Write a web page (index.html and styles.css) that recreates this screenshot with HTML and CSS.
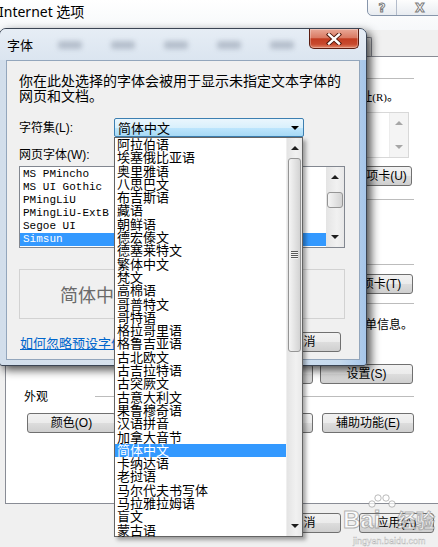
FILE: index.html
```html
<!DOCTYPE html>
<html lang="zh-CN">
<head>
    <meta charset="UTF-8">
    <meta name="viewport" content="width=device-width, initial-scale=1.0">
    <title>Internet 选项 - 字体</title>
    <link rel="stylesheet" href="styles.css">
</head>
<body>
    <!-- the Internet Options window underneath -->
    <div class="inet">
        <div class="inet-title">
            <span class="inet-name">Internet 选项</span>
            <div class="caption">
                <span class="cap-help">?</span>
                <span class="cap-close">X</span>
            </div>
        </div>

        <div class="tabs">
            <span class="tab active">常规</span>
            <span class="tab">安全</span>
            <span class="tab">隐私</span>
            <span class="tab">内容</span>
            <span class="tab">连接</span>
            <span class="tab">程序</span>
            <span class="tab">高级</span>
        </div>

        <div class="panel">
            <div class="group-head"><span>主页</span><i></i></div>
            <div class="note">若要创建多个主页选项卡，请在每行输入一个地址<small>(R)</small>。</div>
            <div class="home-box">
                <div class="home-text">http://www.baidu.com/</div>
                <div class="mini-sb"><span class="arr up off"></span><span class="arr down off"></span></div>
            </div>
            <div class="btn-row home-btns">
                <button class="btn w100">使用当前页(C)</button>
                <button class="btn w100">使用默认值(F)</button>
                <button class="btn w99">使用新选项卡(U)</button>
            </div>

            <div class="group-head startup-head"><span>启动</span><i></i></div>
            <div class="startup">
                <label><input type="radio" name="start"> 从上次会话中的选项卡开始(B)</label>
                <label><input type="radio" name="start" checked> 从主页开始(H)</label>
            </div>

            <div class="group-head"><span>选项卡</span><i></i></div>
            <div class="tab-row">
                <span>更改网页在选项卡中的显示方式。</span>
                <button class="btn w75">选项卡(T)</button>
            </div>

            <div class="group-head hist-head"><span>浏览历史记录</span><i></i></div>
            <div class="hist-note">删除临时文件、历史记录、Cookie、保存的密码和网页表单信息。</div>
            <div class="hist-check"><label><input type="checkbox"> 退出时删除浏览历史记录(W)</label></div>
            <div class="btn-row hist-btns">
                <button class="btn w93">删除(D)...</button>
                <button class="btn w93">设置(S)</button>
            </div>

            <div class="group-head look-head"><span>外观</span><i></i></div>
            <div class="look-row">
                <button class="btn w89">颜色(O)</button>
                <button class="btn w89">语言(L)</button>
                <button class="btn w90">字体(N)</button>
                <button class="btn w92">辅助功能(E)</button>
            </div>
        </div>

        <div class="inet-foot">
            <button class="btn w75">确定</button>
            <button class="btn w75">取消</button>
            <button class="btn w75 apply">应用(A)</button>
        </div>
    </div>

    <!-- the Fonts dialog on top -->
    <div class="font-dlg">
        <div class="dlg-title">
            <span class="dlg-name">字体</span>
            <span class="glass-blur"><i></i><i></i><i></i><i></i><i></i></span>
            <button class="dlg-close">
                <svg width="16" height="12" viewBox="0 0 16 12">
                    <path d="M3 1.5 L13 10.5 M13 1.5 L3 10.5" stroke="#4a1408" stroke-width="4.2" stroke-linecap="square"/>
                    <path d="M3 1.5 L13 10.5 M13 1.5 L3 10.5" stroke="#ffffff" stroke-width="2.4" stroke-linecap="square"/>
                </svg>
            </button>
        </div>

        <div class="dlg-body">
            <p class="desc">你在此处选择的字体会被用于显示未指定文本字体的网页和文档。</p>

            <div class="charset-row">
                <span class="field-label">字符集(L):</span>
                <div class="select">
                    <span>简体中文</span>
                    <span class="select-arrow"></span>

                    <div class="dropdown">
                        <ul>
                            <li>阿拉伯语</li>
                            <li>埃塞俄比亚语</li>
                            <li>奥里雅语</li>
                            <li>八思巴文</li>
                            <li>布吉斯语</li>
                            <li>藏语</li>
                            <li>朝鲜语</li>
                            <li>德宏傣文</li>
                            <li>德塞莱特文</li>
                            <li>繁体中文</li>
                            <li>梵文</li>
                            <li>高棉语</li>
                            <li>哥普特文</li>
                            <li>哥特语</li>
                            <li>格拉哥里语</li>
                            <li>格鲁吉亚语</li>
                            <li>古北欧文</li>
                            <li>古吉拉特语</li>
                            <li>古突厥文</li>
                            <li>古意大利文</li>
                            <li>果鲁穆奇语</li>
                            <li>汉语拼音</li>
                            <li>加拿大音节</li>
                            <li class="sel">简体中文</li>
                            <li>卡纳达语</li>
                            <li>老挝语</li>
                            <li>马尔代夫书写体</li>
                            <li>马拉雅拉姆语</li>
                            <li>盲文</li>
                            <li>蒙古语</li>
                        </ul>
                        <div class="dd-sb">
                            <span class="sb-btn"><span class="arr up"></span></span>
                            <span class="dd-thumb"><span class="grip"></span></span>
                            <span class="sb-track"></span>
                            <span class="sb-btn"><span class="arr down"></span></span>
                        </div>
                    </div>
                </div>
            </div>

            <div class="field-label-w">网页字体(W):</div>
            <div class="fontlist">
                <ul>
                    <li>MS PMincho</li>
                    <li>MS UI Gothic</li>
                    <li>PMingLiU</li>
                    <li>PMingLiU-ExtB</li>
                    <li>Segoe UI</li>
                    <li class="sel">Simsun</li>
                </ul>
                <div class="fl-sb">
                    <span class="sb-btn"><span class="arr up"></span></span>
                    <span class="fl-thumb"></span>
                    <span class="sb-track"></span>
                    <span class="sb-btn"><span class="arr down"></span></span>
                </div>
            </div>

            <div class="preview">简体中文</div>

            <div class="dlg-foot">
                <a href="#" class="help-link">如何忽略预设字体？</a>
                <div class="dlg-buttons">
                    <button class="btn w75">确定</button>
                    <button class="btn w75">取消</button>
                </div>
            </div>
        </div>
    </div>

    <div class="watermark">
        <svg class="paw" width="30" height="16" viewBox="0 0 30 16">
            <circle cx="5" cy="10" r="3.2"/>
            <circle cx="11" cy="4" r="3.2"/>
            <circle cx="19" cy="4" r="3.2"/>
            <circle cx="25" cy="10" r="3.2"/>
        </svg>
        <span class="wm-bai">Bai</span>
        <span class="wm-jy">经验</span>
        <span class="wm-url">jingyan.baidu.com</span>
    </div>
</body>
</html>
```

FILE: styles.css
```css
* {
    box-sizing: border-box;
}

body {
    margin: 0;
    width: 438px;
    height: 547px;
    overflow: hidden;
    position: relative;
    font-family: "Liberation Sans", "Noto Sans CJK SC", sans-serif;
    font-size: 12px;
    color: #000;
    background: #f0f0f0;
}

ul {
    margin: 0;
    padding: 0;
    list-style: none;
}

.btn {
    flex-shrink: 0;
    height: 20px;
    padding: 0;
    border: 1px solid #707070;
    border-radius: 3px;
    background: linear-gradient(#f2f2f2 0%, #ebebeb 50%, #dddddd 51%, #cfcfcf 100%);
    font-family: inherit;
    font-size: 12px;
    line-height: 18px;
    color: #000;
    white-space: nowrap;
}

.w75 { width: 75px; }
.w89 { width: 89px; }
.w90 { width: 90px; }
.w92 { width: 92px; }
.w93 { width: 93px; }
.w99 { width: 99px; }
.w100 { width: 100px; }

/* small scroll arrows */
.arr {
    width: 0;
    height: 0;
    border-left: 4px solid transparent;
    border-right: 4px solid transparent;
}

.arr.up {
    border-bottom: 4px solid #1e1e1e;
}

.arr.down {
    border-top: 4px solid #1e1e1e;
}

.arr.up.off {
    border-bottom-color: #a6a6a6;
}

.arr.down.off {
    border-top-color: #a6a6a6;
}

.sb-btn {
    display: flex;
    align-items: center;
    justify-content: center;
    height: 20px;
    flex-shrink: 0;
}

.sb-track {
    flex: 1;
}

/* ---------- Internet Options window ---------- */

.inet {
    width: 438px;
    height: 547px;
}

.inet-title {
    display: flex;
    align-items: flex-start;
    height: 30px;
    background: linear-gradient(#ffffff, #f6f8fa);
}

.inet-name {
    margin: 4px 0 0 -1px;
    font-family: "Noto Sans", "Noto Sans CJK SC", sans-serif;
    font-size: 14px;
    line-height: 16px;
}

.caption {
    display: flex;
    flex-shrink: 0;
    height: 17px;
    margin: -1px -12px 0 auto;
    border: 1px solid #8796ab;
    border-radius: 0 0 5px 5px;
    background: linear-gradient(#fdfdfd, #e8ecf1);
}

.caption span {
    display: flex;
    align-items: center;
    justify-content: center;
    font-family: "DejaVu Sans", sans-serif;
    font-size: 12px;
    font-weight: bold;
    color: #fff;
    -webkit-text-stroke: 1px #7c7c7c;
}

.cap-help {
    width: 29px;
    border-right: 1px solid #b3bccb;
}

.cap-close {
    width: 52px;
    padding-right: 6px;
}

.tabs {
    display: flex;
    align-items: flex-end;
    height: 26px;
    padding-left: 7px;
}

.tab {
    width: 53px;
    height: 19px;
    margin-right: -1px;
    border: 1px solid #898c95;
    border-bottom: none;
    border-radius: 2px 2px 0 0;
    background: linear-gradient(#f3f3f3, #dedede);
    text-align: center;
    line-height: 17px;
}

.tab.active {
    height: 21px;
    background: #fff;
}

.panel {
    width: 440px;
    height: 448px;
    margin-left: 5px;
    padding: 14px 0 0 18px;
    border: 1px solid #898c95;
    background: #fff;
}

.panel > div {
    width: 390px;
}

.group-head {
    display: flex;
    align-items: center;
    height: 14px;
}

.group-head span {
    width: 71px;
    line-height: 14px;
    padding-top: 2px;
}

.group-head i {
    flex: 1;
    height: 1px;
    background: #bcbcbc;
}

.note {
    margin-top: 5px;
    padding-right: 15px;
    line-height: 14px;
    text-align: right;
    white-space: nowrap;
}

.note small {
    font-family: "Liberation Serif", serif;
    font-size: 11px;
}

.home-box {
    display: flex;
    height: 46px;
    margin: 8px 0 0 38px;
    border: 1px solid #d8d8d8;
    width: 347px !important;
}

.home-text {
    flex: 1;
    padding: 2px 3px;
}

.mini-sb {
    display: flex;
    flex-direction: column;
    align-items: center;
    justify-content: space-between;
    width: 19px;
    padding: 8px 0 8px;
    border-left: 1px solid #ececec;
    background: #f4f4f4;
}

.btn-row {
    display: flex;
    justify-content: flex-end;
    gap: 7px;
}

.home-btns {
    margin-top: 8px;
    padding-right: 2px;
}

.startup-head {
    margin-top: 6px;
}

.startup {
    display: flex;
    flex-direction: column;
    gap: 4px;
    height: 51px;
    padding: 7px 0 0 6px;
}

.startup label,
.hist-check label {
    display: flex;
    align-items: center;
    gap: 2px;
    height: 16px;
}

.startup input,
.hist-check input {
    margin: 0;
    width: 13px;
    height: 13px;
}

.tab-row {
    display: flex;
    align-items: center;
    justify-content: space-between;
    margin-top: 3px;
    padding-right: 1px;
}

.hist-head {
    margin-top: 2px;
}

.hist-note {
    margin-top: 8px;
    padding-right: 1px;
    line-height: 14px;
    text-align: right;
    white-space: nowrap;
}

.hist-check {
    height: 14px;
    margin-top: 7px;
    padding-left: 6px;
}

.hist-btns {
    margin-top: 11px;
    padding-right: 1px;
}

.look-head {
    margin-top: 5px;
}

.look-row {
    display: flex;
    gap: 9px;
    margin-top: 10px;
    padding-left: 3px;
}

.inet-foot {
    display: flex;
    gap: 6px;
    padding: 9px 0 0 185px;
}

.inet-foot .apply {
    margin-left: 12px;
}

/* ---------- Fonts dialog ---------- */

.font-dlg {
    position: absolute;
    left: -1px;
    top: 28px;
    z-index: 2;
    display: flex;
    flex-direction: column;
    width: 368px;
    height: 338px;
    padding: 0 6px 5px 6px;
    border: 1px solid #3b4554;
    border-radius: 7px 7px 3px 3px;
    background: linear-gradient(to right, #d2deeb 0%, #dbe5f0 55%, #c6daee 93%, #a6c6ea 100%);
    box-shadow: 4px 4px 10px rgba(0, 0, 0, 0.7);
}

.dlg-title {
    position: relative;
    display: flex;
    align-items: center;
    height: 31px;
    margin: 0 -6px;
    padding-left: 7px;
    border-radius: 6px 6px 0 0;
    background: linear-gradient(#e6edf5, #dbe5f0);
}

.dlg-name {
    font-family: "Noto Sans CJK SC", sans-serif;
    font-size: 13px;
    line-height: 16px;
}

.glass-blur {
    display: flex;
    gap: 29px;
    margin-left: 25px;
}

.glass-blur i {
    width: 24px;
    height: 8px;
    border-radius: 3px;
    background: rgba(70, 82, 104, 0.28);
    filter: blur(2.5px);
}

.dlg-close {
    position: absolute;
    top: 0;
    right: 7px;
    display: flex;
    align-items: center;
    justify-content: center;
    width: 50px;
    height: 20px;
    padding: 0;
    border: 1px solid #5a1c10;
    border-top: none;
    border-radius: 0 0 5px 5px;
    background: linear-gradient(#e9a998 0%, #da7b64 45%, #c23c21 52%, #c84a2e 80%, #e1886a 100%);
    box-shadow: inset 0 0 0 1px rgba(255, 255, 255, 0.3);
}

.dlg-body {
    flex: 1;
    padding: 12px 13px 0 12px;
    border: 1px solid #93a6bc;
    background: #f0f0f0;
}

.desc {
    margin: 0;
    font-family: "Noto Sans CJK SC", sans-serif;
    font-size: 14px;
    line-height: 15px;
}

.charset-row {
    display: flex;
    align-items: center;
    height: 19px;
    margin-top: 15px;
}

.field-label {
    width: 95px;
    line-height: 14px;
}

.select {
    position: relative;
    display: flex;
    align-items: center;
    width: 190px;
    height: 19px;
    padding-left: 3px;
    border: 1px solid #3c7fb1;
    border-radius: 2px;
    background: linear-gradient(#eaf6fd 0%, #d9f0fc 50%, #bee6fd 51%, #a7d9f5 100%);
    font-size: 13px;
}

.select-arrow {
    margin: 0 4px 0 auto;
    border-top: 4px solid #000;
    border-left: 4px solid transparent;
    border-right: 4px solid transparent;
}

.dropdown {
    position: absolute;
    left: -1px;
    top: 18px;
    z-index: 3;
    display: flex;
    width: 189px;
    height: 400px;
    border: 1px solid #646464;
    background: #fff;
    box-shadow: 3px 3px 4px rgba(0, 0, 0, 0.35);
}

.dropdown ul {
    flex: 1;
}

.dropdown li {
    height: 13.3px;
    padding-left: 2px;
    font-size: 13px;
    line-height: 13.3px;
    white-space: nowrap;
}

.dropdown li.sel,
.fontlist li.sel {
    background: #3399ff;
    color: #fff;
}

.dd-sb,
.fl-sb {
    display: flex;
    flex-direction: column;
    background: linear-gradient(to right, #e4e4e4, #f1f1f1 60%, #e8e8e8);
}

.dd-sb {
    width: 16px;
    border-left: 1px solid #efefef;
}

.dd-thumb {
    display: flex;
    align-items: center;
    justify-content: center;
    height: 194px;
    margin: 0 1px;
    border: 1px solid #959595;
    border-radius: 3px;
    background: linear-gradient(to right, #f5f5f5, #e4e4e4 50%, #d3d3d3);
}

.grip {
    width: 7px;
    height: 8px;
    background: repeating-linear-gradient(#5a5a5a 0 1px, #f4f4f4 1px 2px);
}

.field-label-w {
    margin-top: 11px;
    line-height: 14px;
}

.fontlist {
    display: flex;
    width: 326px;
    height: 82px;
    margin-top: 4px;
    border: 1px solid #828790;
    background: #fff;
}

.fontlist ul {
    flex: 1;
    padding-top: 1px;
}

.fontlist li {
    height: 13px;
    padding-left: 3px;
    font-family: "Liberation Mono", monospace;
    font-size: 11px;
    line-height: 13px;
}

.fl-sb {
    width: 18px;
}

.fl-thumb {
    height: 16px;
    margin: 5px 1px 0;
    border: 1px solid #959595;
    border-radius: 3px;
    background: linear-gradient(to right, #f5f5f5, #e4e4e4 50%, #d3d3d3);
}

.preview {
    width: 326px;
    height: 50px;
    margin-top: 21px;
    padding-left: 40px;
    border: 1px solid #d2d2d2;
    font-family: "Noto Sans CJK SC", sans-serif;
    font-size: 18px;
    line-height: 48px;
    color: #6a6a6a;
}

.dlg-foot {
    display: flex;
    align-items: center;
    width: 326px;
    height: 20px;
    margin-top: 13px;
}

.help-link {
    margin-left: 1px;
    font-family: "Noto Sans CJK SC", sans-serif;
    font-size: 13px;
    color: #0066cc;
}

.dlg-buttons {
    display: flex;
    gap: 6px;
    margin-left: auto;
    padding-right: 4px;
}

/* ---------- watermark ---------- */

.watermark {
    position: absolute;
    left: 343px;
    top: 494px;
    z-index: 5;
    width: 95px;
    height: 53px;
    pointer-events: none;
}

.paw {
    position: absolute;
    left: 24px;
    top: 0;
    fill: rgba(255, 255, 255, 0.7);
    stroke: rgba(120, 120, 120, 0.5);
}

.wm-bai,
.wm-jy {
    position: absolute;
    top: 12px;
    font-family: "Liberation Sans", sans-serif;
    font-size: 24px;
    font-weight: bold;
    color: rgba(255, 255, 255, 0.75);
    -webkit-text-stroke: 1px rgba(110, 110, 110, 0.5);
}

.wm-bai {
    left: 0;
}

.wm-jy {
    left: 54px;
    top: 14px;
    font-family: "Noto Sans CJK SC", sans-serif;
    font-size: 19px;
    line-height: 24px;
}

.wm-url {
    position: absolute;
    left: 10px;
    top: 42px;
    font-size: 9px;
    line-height: 10px;
    color: rgba(255, 255, 255, 0.8);
    -webkit-text-stroke: 0.4px rgba(110, 110, 110, 0.5);
}
```
